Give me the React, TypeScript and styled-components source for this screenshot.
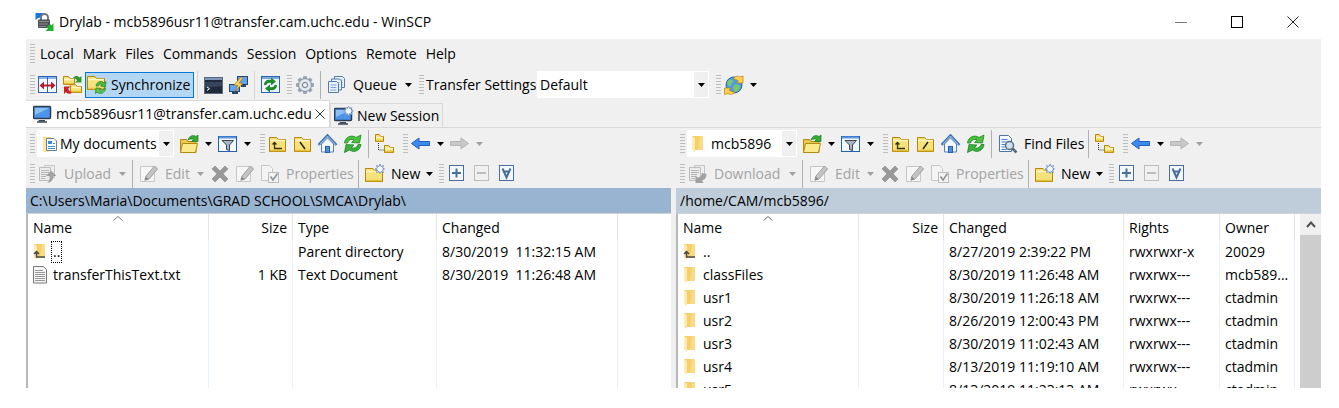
import React from "react";
import styled, { createGlobalStyle, css } from "styled-components";

const GlobalStyle = createGlobalStyle`
  * { box-sizing: border-box; }
  body { margin: 0; background: #fff; color: #000; }
  body, button, select, input { font-family: "Open Sans", "Noto Sans", sans-serif; font-size: 14px; line-height: 20px; }
  button { margin: 0; padding: 0; border: 0; background: none; color: inherit; text-align: left; }
  svg { display: block; flex: none; }
`;

/* ---------- layout ---------- */

const Window = styled.div`
  padding: 0 18px 20px 26px;
  overflow: hidden;
`;

const TitleBar = styled.header`
  display: flex;
  align-items: center;
  height: 39px;
  padding: 4px 0 0 9px;
  gap: 4px;
`;

const Title = styled.h1`
  flex: 1;
  margin: 0;
  font-size: 14px;
  font-weight: 400;
  line-height: 20px;
  white-space: nowrap;
`;

const WindowButtons = styled.div`
  display: flex;
`;

const WindowButton = styled.button`
  width: 56px;
  height: 28px;
  display: flex;
  align-items: center;
  justify-content: center;
`;

const Frame = styled.main`
  background: #f0f0f0;
`;

const MenuBar = styled.nav`
  display: flex;
  align-items: center;
  height: 30px;
`;

const MenuGroup = styled.div`
  display: flex;
  gap: 1px;
  padding-left: 1px;
`;

const MenuItem = styled.button`
  height: 24px;
  padding: 0 4px;
  white-space: nowrap;
`;

const Toolbar = styled.div<{ $height?: number }>`
  display: flex;
  align-items: center;
  height: ${(p) => p.$height ?? 31}px;
  white-space: nowrap;
`;

const Grip = styled.span<{ $wide?: boolean }>`
  flex: none;
  width: 5px;
  height: 20px;
  margin-left: ${(p) => (p.$wide ? 6 : 4)}px;
  background: repeating-linear-gradient(to bottom, #bdbdbd 0 1px, #f0f0f0 1px 3px);
`;

const Separator = styled.span<{ $dark?: boolean }>`
  flex: none;
  width: 1px;
  height: 28px;
  margin: 0 3px;
  background: ${(p) => (p.$dark ? "#b0b0b0" : "#d4d4d4")};
`;

const ToolButton = styled.button<{ $width?: number; $active?: boolean }>`
  flex: none;
  display: flex;
  align-items: center;
  gap: 6px;
  width: ${(p) => p.$width ?? 25}px;
  height: 26px;
  padding: 0 3px;
  &:disabled { color: #a3a3a3; }
  ${(p) =>
    p.$active &&
    css`
      gap: 4px;
      padding: 0 1px;
      background: #b3d7f3;
      border: 1px solid #0078d7;
    `}
`;

const Caret = styled.svg`
  margin-left: auto;
`;

const FieldLabel = styled.label`
  flex: none;
  width: 113px;
  padding-left: 2px;
`;

const Combo = styled.span<{ $width: number }>`
  position: relative;
  flex: none;
  display: flex;
  align-items: center;
  width: ${(p) => p.$width}px;
  height: 27px;
  background: #fff;
`;

const ComboSelect = styled.select<{ $indent: number }>`
  appearance: none;
  width: 100%;
  height: 100%;
  padding: 0 14px 0 ${(p) => p.$indent}px;
  border: 0;
  border-radius: 0;
  background: none;
  color: #000;
`;

const ComboIcon = styled.span`
  position: absolute;
  left: 4px;
  pointer-events: none;
`;

const ComboArrow = styled.span`
  position: absolute;
  right: 1px;
  display: flex;
  align-items: center;
  justify-content: center;
  width: 14px;
  height: 25px;
  background: #f0f0f0;
  pointer-events: none;
`;

const PanelCombo = styled(Combo)`
  margin: 0 2px;
`;

const MainCombo = styled(Combo)`
  margin-right: 3px;
`;

const TabStrip = styled.div`
  display: flex;
  align-items: flex-end;
  height: 28px;
  border-bottom: 1px solid #d9d9d9;
`;

const Tab = styled.div<{ $active?: boolean }>`
  display: flex;
  align-items: center;
  gap: 3px;
  height: ${(p) => (p.$active ? 27 : 24)}px;
  padding: 0 3px;
  border: 1px solid #d9d9d9;
  border-bottom: 0;
  ${(p) =>
    p.$active &&
    css`
      width: 304px;
      padding: 0 6px 0 7px;
      background: #fff;
      border-left: 0;
    `}
`;

const TabLabel = styled.button`
  flex: 1;
  white-space: nowrap;
`;

const Panels = styled.div`
  display: flex;
`;

const Panel = styled.section`
  flex: 1;
  min-width: 0;
`;

const Splitter = styled.div`
  flex: none;
  width: 5px;
`;

const PathBar = styled.div<{ $active?: boolean }>`
  height: 25px;
  padding: 3px 4px 0;
  background: ${(p) => (p.$active ? "#99b4d1" : "#bfcddb")};
  white-space: nowrap;
`;

const ListArea = styled.div`
  display: flex;
  height: 175px;
  overflow: hidden;
  border-left: 2px solid #b4b9be;
  border-top: 1px solid #d0d4d8;
  background: #fff;
`;

const TableBox = styled.div`
  flex: 1;
  min-width: 0;
`;

const FileTable = styled.table`
  width: 100%;
  height: 100%;
  table-layout: fixed;
  border-collapse: separate;
  border-spacing: 0;
  white-space: pre;
`;

const HeadCell = styled.th<{ $right?: boolean }>`
  position: relative;
  height: 26px;
  padding: 2px 5px 0;
  border-right: 1px solid #e5e5e5;
  font-weight: 400;
  text-align: ${(p) => (p.$right ? "right" : "left")};
  &:last-child { padding: 0; border-right: 0; }
`;

const SortMark = styled.svg`
  position: absolute;
  top: 2px;
  left: 50%;
  margin-left: -5px;
`;

const Row = styled.tr`
  height: 23px;
`;

const Cell = styled.td<{ $right?: boolean }>`
  height: 23px;
  padding: 0 5px;
  overflow: hidden;
  border-right: 1px solid #e8f0fa;
  text-align: ${(p) => (p.$right ? "right" : "left")};
  text-overflow: ellipsis;
  &:last-child { padding: 0; border-right: 0; }
`;

const FillCell = styled.td`
  padding: 0;
  border-right: 1px solid #e8f0fa;
  &:last-child { border-right: 0; }
`;

const FileName = styled.span`
  display: flex;
  align-items: center;
  gap: 4px;
  height: 23px;
`;

const NameText = styled.span<{ $focused?: boolean }>`
  padding: 0 1px;
  line-height: 20px;
  border: 1px ${(p) => (p.$focused ? "dotted #000" : "solid transparent")};
`;

const ScrollBar = styled.div`
  flex: none;
  width: 21px;
  background: #cdcdcd;
`;

const ScrollUp = styled.button`
  display: flex;
  align-items: center;
  justify-content: center;
  width: 21px;
  height: 21px;
  background: #f0f0f0;
`;

/* ---------- icons ---------- */

const Svg = ({ children, w = 20, h = 20 }: { children: React.ReactNode; w?: number; h?: number }) => (
  <svg width={w} height={h} viewBox={`0 0 ${w} ${h}`} fill="none" aria-hidden="true">
    {children}
  </svg>
);

const Down = ({ off }: { off?: boolean }) => (
  <Caret width="7" height="4" viewBox="0 0 7 4" aria-hidden="true">
    <path d="M0 0h7L3.5 4z" fill={off ? "#a0a0a0" : "#000"} />
  </Caret>
);

const ComboDown = () => (
  <ComboArrow>
    <svg width="7" height="4" viewBox="0 0 7 4" aria-hidden="true">
      <path d="M0 0h7L3.5 4z" fill="#000" />
    </svg>
  </ComboArrow>
);

const FolderShape = ({ x = 0, y = 0, w = 17, h = 14 }: { x?: number; y?: number; w?: number; h?: number }) => (
  <>
    <path
      d={`M${x + 0.5} ${y + h - 0.5}V${y + 0.5}h${w * 0.42}l1.5 2H${x + w - 0.5}V${y + h - 0.5}z`}
      fill="#f6e27a"
      stroke="#b8860b"
    />
    <path d={`M${x + 1} ${y + 3.5}H${x + w - 1}`} stroke="#fff6c4" strokeWidth="1.5" />
    <path d={`M${x + 1} ${y + h - 1.5}H${x + w - 1}`} stroke="#e3c23f" strokeWidth="1.5" />
  </>
);

const AppIcon = () => (
  <Svg>
    <path d="M0.500 1h8L6 3.500v2L3 6 0.500 8z" fill="#1673e6" />
    <path d="M6 9V5.500a3.500 3.500 0 0 1 7 0V9" stroke="#777" strokeWidth="2" />
    <rect x="3" y="7.500" width="12" height="8.500" rx="1" fill="#4c4f52" />
    <path d="M4 9.500h10M4 12h9M4 14.500h7" stroke="#8c9094" />
    <path d="M18.500 11v8h-8l2.500-2.500-1.500-1.500 3.500-3 1.500 1.500z" fill="#1fb12d" />
  </Svg>
);

const CompareIcon = () => (
  <Svg>
    <rect x="0.500" y="1.500" width="18" height="16" fill="#f6faff" stroke="#2b62b0" />
    <path d="M1 3h17" stroke="#8db4e8" strokeWidth="2" />
    <path d="M9.500 2v16" stroke="#2b62b0" />
    <path d="M4 10.500h11" stroke="#b3202c" strokeWidth="2" />
    <path d="M1.500 10.500l4.500-4v8zM17.500 10.500l-4.500-4v8z" fill="#b3202c" />
  </Svg>
);

const SyncFoldersIcon = () => (
  <Svg>
    <FolderShape x={0} y={1} w={12} h={9} />
    <FolderShape x={7} y={9} w={12} h={9} />
    <path d="M10 3c2-3 5-2.500 6.500-.5L18.500 1v6.500h-6.500l2-2c-1-1.500-2-2.500-4-2.500z" fill="#2c9a35" />
    <path d="M9 18c-3 1.500-5 .5-6-1l-2 2v-7.500h6.500l-2.300 2.300c.8 2 2 3 3.800 4.200z" fill="#cc1f1f" />
  </Svg>
);

const SyncIcon = () => (
  <Svg>
    <FolderShape x={0} y={1} w={18} h={14} />
    <path d="M9 11c.5-4.500 5.500-6 8-3l2-1.500-.5 5.500-5-1 1.500-1.500c-2-1-3 0-3.500 1.500z" fill="#4cb944" stroke="#1d7d26" strokeWidth="0.700" />
    <path d="M18.500 13.500c-.5 4.500-5.500 6.500-8.500 3.500l-1.500 1.500.5-5.500 5 .5-1.500 2c1.500 1 3 .5 3.500-1.500z" fill="#5ccb4c" stroke="#1d7d26" strokeWidth="0.700" />
  </Svg>
);

const TerminalIcon = () => (
  <Svg>
    <rect x="0.500" y="2.500" width="18" height="16" fill="#1f2a3a" stroke="#5a6b80" />
    <path d="M1 4h17" stroke="#8097b5" strokeWidth="2" />
    <path d="M1 7h17v4L1 13z" fill="#35455c" />
    <path d="M3 12l2.500 1.700L3 15.500" stroke="#fff" />
  </Svg>
);

const PuttyIcon = () => (
  <Svg>
    <rect x="8.500" y="1.500" width="10" height="8" fill="#63a4ee" stroke="#27456e" />
    <path d="M12 11h5" stroke="#27456e" strokeWidth="2" />
    <rect x="0.500" y="9.500" width="10" height="7" fill="#63a4ee" stroke="#27456e" />
    <path d="M3 18h6" stroke="#27456e" strokeWidth="2" />
    <path d="M12 2l-7 8 4 .5-3.500 6 8.500-8-4-.5 4-5z" fill="#ffd75a" stroke="#a87408" strokeWidth="0.700" />
  </Svg>
);

const RefreshPanelIcon = () => (
  <Svg>
    <rect x="0.500" y="1.500" width="18" height="16" fill="#eef5fd" stroke="#2b62b0" />
    <path d="M1 3h17" stroke="#7aa8e0" strokeWidth="2" />
    <path d="M3 10c0-4 3.500-6 7-5V2.500l5 4-5 4V8c-2.500-.5-4 0-4.500 2z" fill="#1f8a2b" />
    <path d="M16 10c0 4-3.500 6-7 5v2.500l-5-4 5-4V12c2.500.5 4 0 4.500-2z" fill="#1f8a2b" />
  </Svg>
);

const GearIcon = () => (
  <Svg>
    {[0, 45, 90, 135].map((a) => (
      <rect key={a} x="8" y="1" width="4" height="18" rx="1" fill="#9ba6b4" transform={`rotate(${a} 10 10)`} />
    ))}
    <circle cx="10" cy="10" r="6.500" fill="#cfd6de" stroke="#8c97a6" />
    <circle cx="10" cy="10" r="4.500" stroke="#e9edf1" strokeWidth="1.500" />
    <circle cx="10" cy="10" r="2.500" fill="#f2f2f2" stroke="#6f7b8b" />
  </Svg>
);

const QueueIcon = () => (
  <Svg>
    {[[7, 1], [4, 3.5], [1, 6]].map(([x, y]) => (
      <g key={x}>
        <path d={`M${x + 0.5} ${y + 0.5}h8l2 2v9h-10z`} fill="#eaf2fb" stroke="#557ba8" />
        <path d={`M${x + 2.500} ${y + 4}h6M${x + 2.500} ${y + 6.500}h6M${x + 2.500} ${y + 9}h6`} stroke="#7fa3cc" />
      </g>
    ))}
  </Svg>
);

const GlobeIcon = () => (
  <Svg>
    <circle cx="10" cy="10" r="8" fill="#4d9be8" stroke="#2565ac" />
    <path d="M3 7c3-3 6-3 6-1s-2 2-2 4-3 1-4-1zM10 10c3-1 6 0 6 2s-3 5-5 5-1-3-2-4z" fill="#7cc76a" />
    <path d="M9 4c2-3 5-3.500 7-2l3-1v7h-6.500l2-2c-2-1.500-3.500-2-5.500-2z" fill="#ffd34d" stroke="#b57c0b" strokeWidth="0.700" />
    <path d="M11 17c-2 2.500-5 3-7 1.500l-3.500 1v-6.500h6.500l-2 2c2 1.500 4 2 6 2z" fill="#ffd34d" stroke="#b57c0b" strokeWidth="0.700" />
  </Svg>
);

const MonitorIcon = ({ star }: { star?: boolean }) => (
  <Svg>
    <rect x="0.500" y="2.500" width="17" height="12" rx="1" fill="#4d94e8" stroke="#2d3c50" strokeWidth="1.500" />
    <path d="M2 4h14L2 11z" fill="#8dc0f6" />
    <path d="M6 16h6v1.500H5z" fill="#39475a" />
    <path d="M4 18h10" stroke="#39475a" strokeWidth="1.500" />
    {star && (
      <path
        d="M14.500 0l1 2.500 2.500-1-1 2.500 2.500 1-2.500 1 1 2.500-2.500-1-1 2.500-1-2.500-2.500 1 1-2.500-2.500-1 2.500-1-1-2.500 2.500 1z"
        fill="#f4f9ff"
        stroke="#7893b5"
        strokeWidth="0.700"
      />
    )}
  </Svg>
);

const DocsFolderIcon = () => (
  <Svg w={18}>
    <path d="M2 3h8v14l-6 1-2-1z" fill="#f8d676" />
    <path d="M2 3l3 2v13.500l-3-1.500z" fill="#fbe7a5" />
    <path d="M5.500 4.500h7.500l2.500 2.500v9.500h-10z" fill="#fff" stroke="#73818f" />
    <rect x="7" y="7" width="4" height="3" fill="#3c8bd9" />
    <path d="M7 12.500h7M7 14.500h7M12 9.500h2" stroke="#3c8bd9" />
  </Svg>
);

const SmallFolder = ({ up }: { up?: boolean }) => (
  <Svg w={14} h={18}>
    <path d="M1 1h11v14H4l-3-1z" fill="#f6cf6b" />
    <path d="M9 1h3v14H7z" fill="#fadb85" />
    <path d="M1 1l3 2v14l-3-2z" fill="#fdebb3" />
    {up && <path d="M3.500 9v5H12M1 11l2.500-2.500L6 11" stroke="#4a4a4a" strokeWidth="1.500" />}
  </Svg>
);

const OpenFolderIcon = () => (
  <Svg>
    <path d="M1.500 18.500V5.500h6l1.500 2h8v11z" fill="#e9c94c" stroke="#b08a12" />
    <path d="M1.500 18.500l2-9h15l-2 9z" fill="#f9ea8c" stroke="#b08a12" />
    <path d="M9 6c1-4 5-5.500 8-3.500l2-1.500v6.500h-6.500l2-2C13 4.500 11 5 9 6z" fill="#35ad35" stroke="#1e7a26" strokeWidth="0.700" />
  </Svg>
);

const FilterIcon = () => (
  <Svg>
    <rect x="0.500" y="2.500" width="18" height="15" fill="#f4f9ff" stroke="#2360b5" />
    <path d="M1 3.500h17" stroke="#5d97e0" strokeWidth="2" />
    <path d="M4 6.500h11.500L11.500 11v5.500l-3-1V11z" fill="#a9b5c3" stroke="#3a4858" />
  </Svg>
);

const ParentDirIcon = () => (
  <Svg>
    <FolderShape x={1} y={3} w={17} h={15} />
    <path d="M6.500 9v5.500h7.500M4.500 10.500l2-2 2 2" stroke="#3c3000" strokeWidth="1.300" />
  </Svg>
);

const RootDirIcon = ({ back }: { back?: boolean }) => (
  <Svg>
    <FolderShape x={1} y={3} w={17} h={15} />
    <path d={back ? "M7 8l5 7" : "M12 8l-5 7"} stroke="#2c2400" strokeWidth="1.500" />
  </Svg>
);

const HomeIcon = () => (
  <Svg>
    <path d="M3.500 10v8h12v-8l-6-6z" fill="#f2f7fd" stroke="#5a82b5" />
    <path d="M0.500 11l9-9.500 9 9.500" stroke="#3c6eaf" strokeWidth="2.500" />
    <path d="M1.500 10.500l8-8.500 8 8.500" stroke="#a9c8ee" strokeWidth="0.900" />
    <rect x="7.500" y="12.500" width="4" height="6" fill="#4b8ee0" stroke="#2b62b0" />
  </Svg>
);

const RefreshIcon = () => (
  <Svg>
    <path d="M1.500 9C2 3.500 8 0 13 3.500L18 1l-1.500 8-8-.5 2.500-2.500C8 4.500 5.500 6 4.500 9z" fill="#4cc23f" stroke="#1e8426" strokeWidth="0.800" />
    <path d="M18 10.500c-.5 5.500-6.500 9-11.500 5.500l-5 2.500L3 10.500l8 .5-2.500 2.500c3 1.500 5.500 0 6.500-3z" fill="#3bb03a" stroke="#1e8426" strokeWidth="0.800" />
  </Svg>
);

const TreeIcon = () => (
  <Svg>
    <FolderShape x={0} y={0} w={9} h={8} />
    <FolderShape x={9} y={11} w={10} h={8} />
    <path d="M3.500 9v7H9" stroke="#222" strokeDasharray="1 1" />
  </Svg>
);

const ArrowIcon = ({ forward }: { forward?: boolean }) => (
  <Svg>
    {forward ? (
      <path d="M18.500 9.500l-7.500-5.500V7.500H0.500v4H11v3.500z" fill="#c9c9c9" stroke="#b5b5b5" />
    ) : (
      <path d="M0.500 9.500L8 4v3.500h10.500v4H8v3.500z" fill="#3d8bee" stroke="#2061bd" />
    )}
  </Svg>
);

const FindIcon = () => (
  <Svg>
    <path d="M1.500 1.500h9l3 3v13h-12z" fill="#f3f8fe" stroke="#4d74a6" />
    <path d="M3.500 5.500h6M3.500 8h5M3.500 10.500h4M3.500 13h4M3.500 15.500h5" stroke="#4c83c7" />
    <circle cx="11.500" cy="11.500" r="4" fill="#cfe2f6" stroke="#5b6a7c" strokeWidth="1.500" />
    <path d="M14.500 14.500l4 4" stroke="#5b6a7c" strokeWidth="2.500" />
  </Svg>
);

const TransferIcon = ({ down }: { down?: boolean }) => (
  <Svg>
    <path d="M6.500 1.500h10v12h-10z" fill="#ededed" stroke="#c4c4c4" />
    <path d="M1.500 3.500h11v13h-11z" fill="#ececec" stroke="#bcbcbc" />
    <path d="M3 6.500h8M3 8.500h8M3 10.500h6M3 12.500h5M3 14.500h4" stroke="#b5b5b5" />
    {down ? (
      <path d="M14 9l4.500 1c0 4-2 6-4.500 6.500l1.500 2.500H7.500V11.500l2 2c2.500 0 4-1.500 4.500-4.500z" fill="#a2a2a2" />
    ) : (
      <path d="M9 19c2.500-1.500 3-4 2.500-7H8l5-5.500 5.500 5.500h-3c0 3.500-2 6.500-6.500 7z" fill="#a2a2a2" />
    )}
  </Svg>
);

const EditIcon = () => (
  <Svg>
    <path d="M1.500 2.500h14v15h-14z" fill="#f6f6f6" stroke="#c6c6c6" />
    <path d="M6 16l1-4L15.500 2l3 3L10 15z" fill="#c4c4c4" stroke="#a0a0a0" />
    <path d="M5.500 16.500l1.200-4 3 3z" fill="#888" />
  </Svg>
);

const DeleteIcon = () => (
  <Svg>
    <path
      d="M2 5l3-3 5 5 5-5 3 3-5 4.800 5 5.200-3 3-5-5-5 5-3-3 5-5.200z"
      fill="#999"
      stroke="#858585"
      strokeWidth="0.600"
    />
  </Svg>
);

const PropertiesIcon = () => (
  <Svg>
    <path d="M1.500 1.500h8l3 3v12h-11z" fill="#f3f3f3" stroke="#c6c6c6" />
    <rect x="8.500" y="8.500" width="10" height="10" fill="#f3f3f3" stroke="#bdbdbd" />
    <path d="M10.500 12.500l2.500 3.500 4.500-6.500" stroke="#969696" strokeWidth="1.700" />
  </Svg>
);

const NewFolderIcon = () => (
  <Svg>
    <FolderShape x={0} y={4} w={18} h={14} />
    <path
      d="M15 0l1 2.500 2.500-1-1 2.500 2 1-2 1 1 2.500-2.500-1-1 2-1-2-2.500 1 1-2.500-2.500-1 2.500-1-1-2.500 2.500 1z"
      fill="#f4f9ff"
      stroke="#5f83b5"
      strokeWidth="0.800"
    />
  </Svg>
);

const BoxIcon = ({ kind }: { kind: "plus" | "minus" | "invert" }) => {
  const color = kind === "minus" ? "#bcbcbc" : "#4b6d9b";
  return (
    <Svg>
      <rect x="2.500" y="1.500" width="14" height="15" fill={kind === "minus" ? "#f0f0f0" : "#f3f8fd"} stroke={color} />
      {kind === "plus" && <path d="M5 9h9M9.500 4.500v9" stroke={color} strokeWidth="2" />}
      {kind === "minus" && <path d="M5 9h9" stroke={color} strokeWidth="2" />}
      {kind === "invert" && <path d="M5.500 4.500l4 9 4-9M6.500 7.500h6" stroke={color} strokeWidth="2" />}
    </Svg>
  );
};

const TextFileIcon = () => (
  <Svg w={14} h={18}>
    <path d="M0.500 0.500h10l3 3v13.500h-13z" fill="#f5f5f5" stroke="#7a7a7a" />
    <path d="M2 4.500h8M2 6.500h10M2 8.500h10M2 10.500h10M2 12.500h10M2 14.500h10" stroke="#9a9a9a" />
  </Svg>
);

/* ---------- panels ---------- */

type FileEntry = { name: string; kind: "up" | "folder" | "text"; cells: string[] };
type Column = { label: string; width: number; right?: boolean };

const localColumns: Column[] = [
  { label: "Name", width: 181 },
  { label: "Size", width: 84, right: true },
  { label: "Type", width: 144 },
  { label: "Changed", width: 181 },
];

const localFiles: FileEntry[] = [
  { name: "..", kind: "up", cells: ["", "Parent directory", "8/30/2019  11:32:15 AM"] },
  { name: "transferThisText.txt", kind: "text", cells: ["1 KB", "Text Document", "8/30/2019  11:26:48 AM"] },
];

const remoteColumns: Column[] = [
  { label: "Name", width: 181 },
  { label: "Size", width: 85, right: true },
  { label: "Changed", width: 180 },
  { label: "Rights", width: 96 },
  { label: "Owner", width: 75 },
];

const remoteFiles: FileEntry[] = [
  { name: "..", kind: "up", cells: ["", "8/27/2019 2:39:22 PM", "rwxrwxr-x", "20029"] },
  { name: "classFiles", kind: "folder", cells: ["", "8/30/2019 11:26:48 AM", "rwxrwx---", "mcb589..."] },
  { name: "usr1", kind: "folder", cells: ["", "8/30/2019 11:26:18 AM", "rwxrwx---", "ctadmin"] },
  { name: "usr2", kind: "folder", cells: ["", "8/26/2019 12:00:43 PM", "rwxrwx---", "ctadmin"] },
  { name: "usr3", kind: "folder", cells: ["", "8/30/2019 11:02:43 AM", "rwxrwx---", "ctadmin"] },
  { name: "usr4", kind: "folder", cells: ["", "8/13/2019 11:19:10 AM", "rwxrwx---", "ctadmin"] },
  { name: "usr5", kind: "folder", cells: ["", "8/13/2019 11:23:13 AM", "rwxrwx---", "ctadmin"] },
];

type FileListProps = { columns: Column[]; files: FileEntry[]; focusFirst?: boolean };

function FileList({ columns, files, focusFirst }: FileListProps) {
  return (
    <TableBox>
      <FileTable>
        <colgroup>
          {columns.map((c) => (
            <col key={c.label} style={{ width: c.width }} />
          ))}
          <col />
        </colgroup>
        <thead>
          <tr>
            {columns.map((c, i) => (
              <HeadCell key={c.label} $right={c.right} scope="col">
                {c.label}
                {i === 0 && (
                  <SortMark width="10" height="5" viewBox="0 0 10 5" fill="none" aria-hidden="true">
                    <path d="M0.500 4.500L5 0.500l4.500 4" stroke="#777" />
                  </SortMark>
                )}
              </HeadCell>
            ))}
            <HeadCell as="td" />
          </tr>
        </thead>
        <tbody>
          {files.map((f, row) => (
            <Row key={f.name}>
              <Cell>
                <FileName>
                  {f.kind === "text" ? <TextFileIcon /> : <SmallFolder up={f.kind === "up"} />}
                  <NameText $focused={focusFirst && row === 0}>{f.name}</NameText>
                </FileName>
              </Cell>
              {f.cells.map((c, i) => (
                <Cell key={i} $right={columns[i + 1].right}>
                  {c}
                </Cell>
              ))}
              <Cell />
            </Row>
          ))}
          <tr aria-hidden="true">
            {columns.map((c) => (
              <FillCell key={c.label} />
            ))}
            <FillCell />
          </tr>
        </tbody>
      </FileTable>
    </TableBox>
  );
}

type PanelProps = {
  remote?: boolean;
  place: string;
  path: string;
};

function FilePanel({ remote, place, path }: PanelProps) {
  return (
    <Panel aria-label={remote ? "Remote files" : "Local files"}>
      <Toolbar>
        <Grip />
        <PanelCombo $width={remote ? 110 : 137}>
          <ComboIcon>{remote ? <SmallFolder /> : <DocsFolderIcon />}</ComboIcon>
          <ComboSelect $indent={remote ? 24 : 23} aria-label="Directory">
            <option>{place}</option>
          </ComboSelect>
          <ComboDown />
        </PanelCombo>
        <ToolButton $width={39} aria-label="Open directory"><OpenFolderIcon /><Down /></ToolButton>
        <ToolButton $width={39} aria-label="Filter"><FilterIcon /><Down /></ToolButton>
        <Grip $wide />
        <ToolButton aria-label="Parent directory"><ParentDirIcon /></ToolButton>
        <ToolButton aria-label="Root directory"><RootDirIcon back={!remote} /></ToolButton>
        <ToolButton aria-label="Home directory"><HomeIcon /></ToolButton>
        <ToolButton aria-label="Refresh"><RefreshIcon /></ToolButton>
        <Separator $dark />
        {remote && (
          <>
            <ToolButton $width={90}><FindIcon />Find Files</ToolButton>
            <Separator $dark />
          </>
        )}
        <ToolButton aria-label="Tree"><TreeIcon /></ToolButton>
        <Grip $wide />
        <ToolButton $width={39} aria-label="Back"><ArrowIcon /><Down /></ToolButton>
        <ToolButton $width={39} aria-label="Forward" disabled><ArrowIcon forward /><Down off /></ToolButton>
      </Toolbar>
      <Toolbar $height={29}>
        <Grip />
        <ToolButton $width={remote ? 114 : 94} disabled>
          <TransferIcon down={remote} />
          {remote ? "Download" : "Upload"}
          <Down off />
        </ToolButton>
        <Separator $dark />
        <ToolButton $width={71} disabled><EditIcon />Edit<Down off /></ToolButton>
        <ToolButton aria-label="Delete" disabled><DeleteIcon /></ToolButton>
        <ToolButton aria-label="Rename" disabled><EditIcon /></ToolButton>
        <ToolButton $width={98} disabled><PropertiesIcon />Properties</ToolButton>
        <Separator $dark />
        <ToolButton $width={71}><NewFolderIcon />New<Down /></ToolButton>
        <Grip $wide />
        <ToolButton aria-label="Select"><BoxIcon kind="plus" /></ToolButton>
        <ToolButton aria-label="Unselect" disabled><BoxIcon kind="minus" /></ToolButton>
        <ToolButton aria-label="Invert selection"><BoxIcon kind="invert" /></ToolButton>
      </Toolbar>
      <PathBar $active={!remote}>{path}</PathBar>
      <ListArea>
        <FileList
          columns={remote ? remoteColumns : localColumns}
          files={remote ? remoteFiles : localFiles}
          focusFirst={!remote}
        />
        {remote && (
          <ScrollBar>
            <ScrollUp aria-label="Scroll up">
              <Svg w={10} h={7}><path d="M1 6l4-4.500L9 6" stroke="#505050" strokeWidth="2" /></Svg>
            </ScrollUp>
          </ScrollBar>
        )}
      </ListArea>
    </Panel>
  );
}

const menus = ["Local", "Mark", "Files", "Commands", "Session", "Options", "Remote", "Help"];

export default function App() {
  return (
    <Window>
      <GlobalStyle />
      <TitleBar>
        <AppIcon />
        <Title>Drylab - mcb5896usr11@transfer.cam.uchc.edu - WinSCP</Title>
        <WindowButtons>
          <WindowButton aria-label="Minimize"><Svg w={12} h={12}><path d="M0 6.500h12" stroke="#777" /></Svg></WindowButton>
          <WindowButton aria-label="Maximize"><Svg w={12} h={12}><rect x="0.500" y="0.500" width="11" height="11" stroke="#000" /></Svg></WindowButton>
          <WindowButton aria-label="Close"><Svg w={12} h={12}><path d="M0.500 0.500l11 11M11.500 0.500l-11 11" stroke="#222" /></Svg></WindowButton>
        </WindowButtons>
      </TitleBar>
      <Frame>
        <MenuBar>
          <Grip />
          <MenuGroup>
            {menus.map((m) => (
              <MenuItem key={m}>{m}</MenuItem>
            ))}
          </MenuGroup>
        </MenuBar>
        <Toolbar>
          <Grip />
          <ToolButton aria-label="Compare directories"><CompareIcon /></ToolButton>
          <ToolButton aria-label="Synchronize browsing"><SyncFoldersIcon /></ToolButton>
          <ToolButton $width={109} $active><SyncIcon />Synchronize</ToolButton>
          <Separator />
          <ToolButton aria-label="Open terminal"><TerminalIcon /></ToolButton>
          <ToolButton aria-label="Open in PuTTY"><PuttyIcon /></ToolButton>
          <Separator />
          <ToolButton aria-label="Refresh panels"><RefreshPanelIcon /></ToolButton>
          <Grip />
          <ToolButton aria-label="Preferences"><GearIcon /></ToolButton>
          <Separator $dark />
          <ToolButton $width={91}><QueueIcon />Queue<Down /></ToolButton>
          <Grip />
          <FieldLabel htmlFor="transfer-settings">Transfer Settings</FieldLabel>
          <MainCombo $width={172}>
            <ComboSelect id="transfer-settings" $indent={3}>
              <option>Default</option>
            </ComboSelect>
            <ComboDown />
          </MainCombo>
          <Grip />
          <ToolButton $width={39} aria-label="Web resources"><GlobeIcon /><Down /></ToolButton>
        </Toolbar>
        <TabStrip>
          <Tab $active>
            <MonitorIcon />
            <TabLabel>mcb5896usr11@transfer.cam.uchc.edu</TabLabel>
            <button aria-label="Close tab">
              <Svg w={10} h={10}><path d="M0.500 0.500l9 9M9.500 0.500l-9 9" stroke="#333" /></Svg>
            </button>
          </Tab>
          <Tab>
            <MonitorIcon star />
            <TabLabel>New Session</TabLabel>
          </Tab>
        </TabStrip>
        <Panels>
          <FilePanel place="My documents" path="C:\Users\Maria\Documents\GRAD SCHOOL\SMCA\Drylab\" />
          <Splitter />
          <FilePanel remote place="mcb5896" path="/home/CAM/mcb5896/" />
        </Panels>
      </Frame>
    </Window>
  );
}
